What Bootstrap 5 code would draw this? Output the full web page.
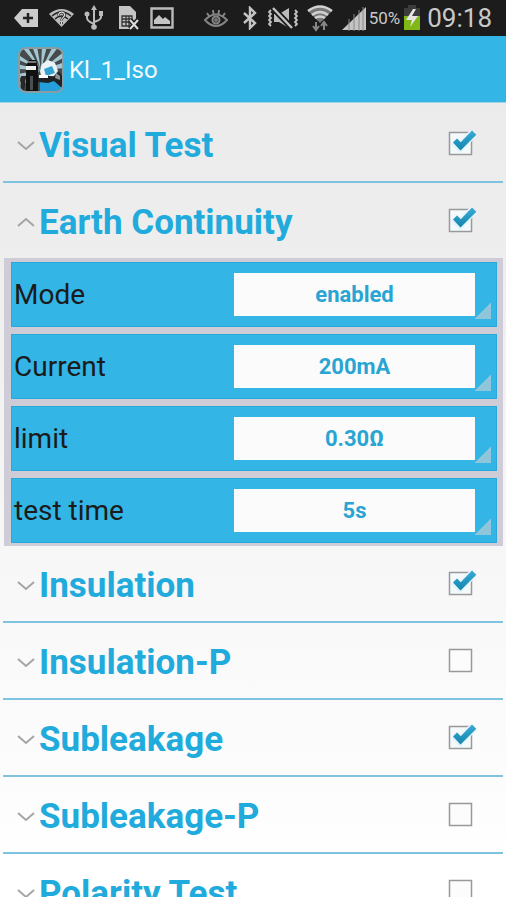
<!DOCTYPE html>
<html lang="en">
<head>
<meta charset="utf-8">
<meta name="viewport" content="width=device-width, initial-scale=1">
<title>Kl_1_Iso</title>
<link href="https://cdn.jsdelivr.net/npm/bootstrap@5.3.0/dist/css/bootstrap.min.css" rel="stylesheet">
<style>
  :root { --holo: #33b5e5; --holo-text: #21abdc; --edge: #cfccd8; }
  body { font-family: Roboto, "Liberation Sans", sans-serif; background: #fff; }
  .screen { background: linear-gradient(#ebebeb 100px, #eeeeee 260px, #f7f7f7 560px, #ffffff 880px); padding-bottom: 3px; }
  .status-bar { background: #1c1c1c; color: #c9c9c9; height: 36px; padding: 0 14px; }
  .status-left { gap: 10px; }
  .status-right { gap: 9px; }
  .battery-group { gap: 2px; }
  .percent { font-size: 17px; line-height: 24px; }
  .clock { font-size: 26px; line-height: 34px; margin-left: -4px; }
  .title-bar { background: var(--holo); height: 67px; padding: 2px 17px 0; gap: 4px; border-bottom: 1px solid #a5d3e6; }
  .title-text { font-size: 24px; line-height: 32px; font-weight: 400; color: #f2fbff; }
  .test-list { padding: 3px 3px 0; }
  .test-row { height: 77px; padding: 0 26px 0 13px; border-bottom: 2px solid #7fc3e1; }
  .test-row.open { border-bottom: 0; height: 75px; }
  .test-toggle { color: var(--holo-text); font-size: 35px; line-height: 48px; font-weight: 700; gap: 3px; margin-top: 4px; padding: 0; border: 0; background: none; text-align: left; }
  .tick { appearance: none; width: 29px; height: 28px; margin: 0 0 4px; flex: none;
    background: url("data:image/svg+xml,%3Csvg xmlns='http://www.w3.org/2000/svg' viewBox='0 0 29 28'%3E%3Crect x='1.500' y='4.500' width='22' height='22' fill='%23fcfcfc' stroke='%23999' stroke-width='1.500'/%3E%3C/svg%3E") center / 100% 100% no-repeat; }
  .tick:checked { background-image: url("data:image/svg+xml,%3Csvg xmlns='http://www.w3.org/2000/svg' viewBox='0 0 29 28'%3E%3Cdefs%3E%3ClinearGradient id='g' x1='0' y1='0' x2='0' y2='1'%3E%3Cstop stop-color='%2338abd6'/%3E%3Cstop offset='1' stop-color='%231585ad'/%3E%3C/linearGradient%3E%3C/defs%3E%3Crect x='1.500' y='4.500' width='22' height='22' fill='%23f4fafc' stroke='%23999' stroke-width='1.500'/%3E%3Cpath d='M6 13l6 6L25.500 5' fill='none' stroke='%23e3f4fb' stroke-width='9'/%3E%3Cpath d='M5 14.500L9 10.500l3.800 3.800L24 2.500l4.300 4.300L12.500 22.500z' fill='url(%23g)'/%3E%3C/svg%3E"); }
  .settings { background: var(--edge); padding: 4px 6px 3px 7px; gap: 7px; margin: 0 0 0 1px; }
  .setting { background: var(--holo); min-height: 65px; padding: 0 6px 0 3px; outline: 1px solid #27aadb; outline-offset: -1px; }
  .setting-name { font-size: 28px; line-height: 36px; color: #1b1b1b; }
  .spinner-wrap { width: 257px; height: 49px; padding: 3px 16px 3px 0; margin-bottom: 1px;
    background: linear-gradient(135deg, transparent 50%, #8fc6da 50%) right bottom / 16px 16px no-repeat; }
  .spinner-field { appearance: none; width: 100%; height: 43px; border: 0; border-radius: 0; background: #fbfbfb; color: #28a5d3; font-size: 22px; line-height: 28px; font-weight: 700; text-align: center; text-align-last: center; padding: 2px 0 0; }
</style>
<script src="https://cdn.jsdelivr.net/npm/bootstrap@5.3.0/dist/js/bootstrap.bundle.min.js"></script>
</head>
<body>
<div class="screen vh-100 d-flex flex-column overflow-hidden">
  <div class="status-bar d-flex align-items-center justify-content-between flex-shrink-0">
    <div class="status-left d-flex align-items-center">
      <svg width="25" height="22" viewBox="0 0 25 22" aria-hidden="true"><path d="M0 11L8 2h16v18H8z" fill="#ccc"/><path d="M14 6v10M9 11h10" stroke="#222" stroke-width="2.500"/></svg>
      <svg width="25" height="22" viewBox="0 0 25 22" aria-hidden="true"><path d="M0 7Q12.500-3 25 7L12.500 20z" fill="#bbb"/><path d="M3 9Q12.500 1 22 9M6 12Q12.500 6 19 12" fill="none" stroke="#222" stroke-width="1.300"/><path d="M9.500 8.500c0-5 7-4 6 0-.5 2-3 2-3 5M12.500 15v2" fill="none" stroke="#222" stroke-width="2.600"/><path d="M9.500 8.500c0-5 7-4 6 0-.5 2-3 2-3 5M12.500 15v2" fill="none" stroke="#ddd" stroke-width="1.200"/></svg>
      <svg width="20" height="26" viewBox="0 0 20 26" aria-hidden="true"><path d="M10 3v20M3 8v5q0 3 7 6M17 8v4q0 3-7 5" fill="none" stroke="#bbb" stroke-width="2"/><path d="M10 0l3 5H7z" fill="#bbb"/><circle cx="10" cy="22" r="2.800" fill="#bbb"/><circle cx="3" cy="9" r="2.500" fill="#bbb"/><path d="M15 6h4v5h-4z" fill="#bbb"/></svg>
      <svg class="ms-1" width="22" height="26" viewBox="0 0 22 26" aria-hidden="true"><path d="M1 1h11l6 6v17H1z" fill="#c4c4c4"/><path d="M4 11h10v10H4zM4 14h10M4 17h10M8 11v10M11 11v10" fill="none" stroke="#333" stroke-width="1.300"/><path d="M12 15l8 9m0-9l-8 9" stroke="#1c1c1c" stroke-width="5"/><path d="M12 15l8 9m0-9l-8 9" stroke="#ddd" stroke-width="2"/></svg>
      <svg width="24" height="22" viewBox="0 0 24 22" aria-hidden="true"><path d="M1.500 1.500h21v19h-21z" fill="none" stroke="#bbb" stroke-width="2.400"/><path d="M4 17v-4l5-5 4 4 2-2 5 4v3z" fill="#c4c4c4"/></svg>
    </div>
    <div class="status-right d-flex align-items-center">
      <svg width="24" height="22" viewBox="0 0 24 22" aria-hidden="true"><g fill="none" stroke="#858585" stroke-width="2"><path d="M1 13q11-11 22 0-11 12-22 0zM3 6l2 3M9 3l.5 4M15 3l-.5 4M21 6l-2 3"/><circle cx="12" cy="13" r="3.500"/></g><circle cx="12" cy="13" r="2" fill="#777"/></svg>
      <svg class="ms-1" width="18" height="24" viewBox="0 0 18 24" aria-hidden="true"><path d="M3 7l11 10-5 5V2l5 5L3 17" fill="none" stroke="#c4c4c4" stroke-width="2.400"/></svg>
      <svg width="30" height="22" viewBox="0 0 30 22" aria-hidden="true"><path d="M6 7h5l10-6v20l-10-6H6z" fill="#bbb"/><path d="M5 1l19 20" stroke="#1c1c1c" stroke-width="6"/><path d="M5 1l19 20" stroke="#c4c4c4" stroke-width="2.400"/><path d="M3 3l-2 2 2 2-2 2 2 2-2 2 2 2-2 2 2 2M27 3l2 2-2 2 2 2-2 2 2 2-2 2 2 2-2 2" fill="none" stroke="#c4c4c4" stroke-width="1.800"/></svg>
      <svg width="26" height="27" viewBox="0 0 26 27" aria-hidden="true"><path d="M1 6Q13-3 25 6L13 18z" fill="#777"/><path d="M1 6Q13-3 25 6M5 10Q13 4 21 10M8 13Q13 10 18 13" fill="none" stroke="#d2d2d2" stroke-width="2.600"/><path d="M9 17v7m-3-3l3 4 3-4M17 25v-7m-3 3l3-4 3 4" fill="none" stroke="#888" stroke-width="2"/></svg>
      <div class="battery-group d-flex align-items-center">
        <svg width="25" height="25" viewBox="0 0 25 25" aria-hidden="true"><path d="M0 24L24 1v23z" fill="#c4c4c4"/><path d="M7 13v12M12 8v17M17 4v21M21 1v24" stroke="#888" stroke-width="1"/></svg>
        <span class="percent">50%</span>
        <svg width="20" height="26" viewBox="0 0 20 26" aria-hidden="true"><path d="M6 0h8v3h4v8H2V3h4z" fill="#3c3c3c"/><path d="M2 11h16v14H2z" fill="#80b816"/><path d="M11 4l-7 11h6l-2 7 8-11h-6l4-7z" fill="#e5e5e5"/></svg>
      </div>
      <span class="clock">09:18</span>
    </div>
  </div>

  <header class="title-bar d-flex align-items-center flex-shrink-0">
    <svg width="48" height="48" viewBox="0 0 48 48" role="img" aria-label="App icon">
      <defs><clipPath id="tile"><rect x="2" y="2" width="44" height="44" rx="7"/></clipPath></defs>
      <g clip-path="url(#tile)">
        <path d="M0 0h48v48H0z" fill="#454a4d"/>
        <path d="M24 24L4 0h6zM24 24L15 0h5zM24 24L25 0h5zM24 24L36 0h6zM24 24L48 5v6zM24 24L48 16v6zM24 24L0 8v5zM24 24L0 18v5zM24 24L0 28v5zM24 24L0 38v6z" fill="#a5c7d2"/>
        <path d="M23 36l16-5 9 10v7H23z" fill="#249fdb"/>
        <path d="M9 20l3-6h7l2 7v26H9z" fill="#111"/><path d="M9 20h10v4H9z" fill="#eee"/><path d="M11 15h8v2h-8z" fill="#777"/>
        <path d="M4 30h5l-2 18H3z" fill="#272727"/><path d="M13 30h3v14h-3z" fill="#4a4f52"/>
        <path d="M23 25l2-7 6-4 7 3 3 8-4 5H24z" fill="#edf4f6"/><path d="M27 23l8-3 3 7-9 3z" fill="#32a2d1"/>
        <path d="M21 32l8-3 7 2 6-5 4 5v12l-9-8-6 2-10-1z" fill="#202325"/><path d="M22 29h9v3h-9z" fill="#fff"/>
        <path d="M39 27l4 3v4l-5-2z" fill="#8b959a"/>
      </g>
      <rect x="2" y="2" width="44" height="44" rx="7" fill="none" stroke="#8c9ca3" stroke-width="2"/>
    </svg>
    <h1 class="title-text mb-0">Kl_1_Iso</h1>
  </header>

  <main class="test-list flex-grow-1 overflow-hidden">
    <section class="test-row d-flex align-items-center justify-content-between">
      <button type="button" class="test-toggle d-flex align-items-center" id="t1" aria-expanded="false"><svg width="20" height="12" viewBox="0 0 20 12" aria-hidden="true"><path d="M2 2l8 7 8-7" fill="none" stroke="#a5a5a5" stroke-width="2"/></svg>Visual Test</button>
      <input class="tick" type="checkbox" aria-labelledby="t1" checked>
    </section>
    <section class="test-row open d-flex align-items-center justify-content-between">
      <button type="button" class="test-toggle d-flex align-items-center" id="t2" aria-expanded="true" aria-controls="earth"><svg width="20" height="12" viewBox="0 0 20 12" aria-hidden="true"><path d="M2 9l8-7 8 7" fill="none" stroke="#a5a5a5" stroke-width="2"/></svg>Earth Continuity</button>
      <input class="tick" type="checkbox" aria-labelledby="t2" checked>
    </section>
    <div class="settings d-flex flex-column" id="earth">
      <div class="setting d-flex align-items-center justify-content-between"><label class="setting-name" for="mode">Mode</label><div class="spinner-wrap"><select class="spinner-field" id="mode"><option>enabled</option></select></div></div>
      <div class="setting d-flex align-items-center justify-content-between"><label class="setting-name" for="current">Current</label><div class="spinner-wrap"><select class="spinner-field" id="current"><option>200mA</option></select></div></div>
      <div class="setting d-flex align-items-center justify-content-between"><label class="setting-name" for="limit">limit</label><div class="spinner-wrap"><select class="spinner-field" id="limit"><option>0.30Ω</option></select></div></div>
      <div class="setting d-flex align-items-center justify-content-between"><label class="setting-name" for="time">test time</label><div class="spinner-wrap"><select class="spinner-field" id="time"><option>5s</option></select></div></div>
    </div>
    <section class="test-row d-flex align-items-center justify-content-between">
      <button type="button" class="test-toggle d-flex align-items-center" id="t3" aria-expanded="false"><svg width="20" height="12" viewBox="0 0 20 12" aria-hidden="true"><path d="M2 2l8 7 8-7" fill="none" stroke="#a5a5a5" stroke-width="2"/></svg>Insulation</button>
      <input class="tick" type="checkbox" aria-labelledby="t3" checked>
    </section>
    <section class="test-row d-flex align-items-center justify-content-between">
      <button type="button" class="test-toggle d-flex align-items-center" id="t4" aria-expanded="false"><svg width="20" height="12" viewBox="0 0 20 12" aria-hidden="true"><path d="M2 2l8 7 8-7" fill="none" stroke="#a5a5a5" stroke-width="2"/></svg>Insulation-P</button>
      <input class="tick" type="checkbox" aria-labelledby="t4">
    </section>
    <section class="test-row d-flex align-items-center justify-content-between">
      <button type="button" class="test-toggle d-flex align-items-center" id="t5" aria-expanded="false"><svg width="20" height="12" viewBox="0 0 20 12" aria-hidden="true"><path d="M2 2l8 7 8-7" fill="none" stroke="#a5a5a5" stroke-width="2"/></svg>Subleakage</button>
      <input class="tick" type="checkbox" aria-labelledby="t5" checked>
    </section>
    <section class="test-row d-flex align-items-center justify-content-between">
      <button type="button" class="test-toggle d-flex align-items-center" id="t6" aria-expanded="false"><svg width="20" height="12" viewBox="0 0 20 12" aria-hidden="true"><path d="M2 2l8 7 8-7" fill="none" stroke="#a5a5a5" stroke-width="2"/></svg>Subleakage-P</button>
      <input class="tick" type="checkbox" aria-labelledby="t6">
    </section>
    <section class="test-row d-flex align-items-center justify-content-between">
      <button type="button" class="test-toggle d-flex align-items-center" id="t7" aria-expanded="false"><svg width="20" height="12" viewBox="0 0 20 12" aria-hidden="true"><path d="M2 2l8 7 8-7" fill="none" stroke="#a5a5a5" stroke-width="2"/></svg>Polarity Test</button>
      <input class="tick" type="checkbox" aria-labelledby="t7">
    </section>
  </main>
</div>
</body>
</html>
